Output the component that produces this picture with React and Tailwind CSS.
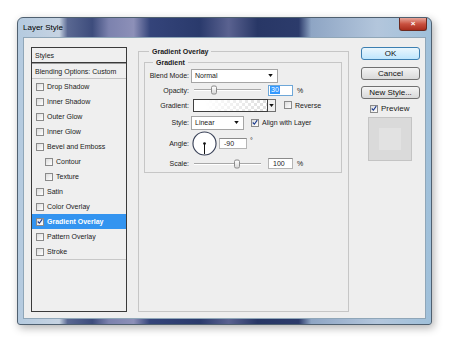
import React from 'react';

const Check = ({ checked, className = '' }) => (
  <span className={`w-[8px] h-[8px] shrink-0 border border-[#8a8a8a] bg-gradient-to-br from-[#dcdcdc] to-white flex items-center justify-center ${className}`}>
    {checked && (
      <svg viewBox="0 0 8 8" className="w-[7px] h-[7px]">
        <path d="M1 4 L3.2 6.3 L7 0.8" stroke="#1d3c8f" strokeWidth="1.5" fill="none" />
      </svg>
    )}
  </span>
);

const Arrow = () => (
  <svg viewBox="0 0 6 4" className="w-[5px] h-[3px]">
    <path d="M0 0 H6 L3 4 Z" fill="#111" />
  </svg>
);

const Slider = ({ thumb }) => (
  <div className="relative w-[67px] h-full flex items-center">
    <div className="w-full h-[2px] border-t border-[#a8a8a8] border-b border-b-white" />
    <div
      className={`absolute ${thumb} top-1/2 -translate-y-1/2 w-[6px] h-[9px] rounded-[2px] border border-[#8c8c8c] bg-gradient-to-b from-white to-[#d8d8d8]`}
    />
  </div>
);

const Field = ({ w, children }) => (
  <div className={`${w} h-[11px] bg-white border border-[#b5b5b5] border-t-[#8a8a8a] flex items-center pl-[4px]`}>
    {children}
  </div>
);

const Button = ({ children, primary }) => (
  <div
    className={`h-[13px] w-full rounded-[3px] border flex items-center justify-center text-[8px] text-[#111] ${
      primary
        ? 'border-[#3c7fb1] bg-gradient-to-b from-[#eaf6fd] to-[#bee6fd]'
        : 'border-[#707070] bg-gradient-to-b from-[#f4f4f4] to-[#d9d9d9]'
    }`}
  >
    {children}
  </div>
);

const items = [
  ['Drop Shadow'],
  ['Inner Shadow'],
  ['Outer Glow'],
  ['Inner Glow'],
  ['Bevel and Emboss'],
  ['Contour', true],
  ['Texture', true],
  ['Satin'],
  ['Color Overlay'],
  ['Gradient Overlay', false, true],
  ['Pattern Overlay'],
  ['Stroke'],
];

export default function App() {
  return (
    <div className="w-[450px] h-[343px] bg-white pt-[17px] pl-[17px] font-['Liberation_Sans',Arial,sans-serif] text-[7px] text-[#1a1a1a] leading-none">
      <div className="w-[415px] h-[308px] rounded-t-[6px] rounded-b-[3px] border border-[#4f6070] flex flex-col shadow-[2px_3px_8px_rgba(0,0,0,0.3)] bg-[linear-gradient(90deg,#b4cadf_0%,#c6d3e2_10%,#5a6892_12%,#3d4c7c_18%,#7c82ae_22%,#8d90b8_28%,#34447a_32%,#2a3a6c_44%,#5a6290_51%,#283766_58%,#2c3b6b_68%,#8ea5c4_71%,#b3c6dc_87%,#9fc0da_100%)]">
        {/* title bar */}
        <div className="h-[19px] flex items-start shrink-0">
          <div className="self-center pl-[5px] text-[8px] text-black">Layer Style</div>
          <div className="ml-auto mr-[4px] w-[28px] h-[13px] rounded-b-[3px] border border-[#6b2a20] border-t-0 bg-gradient-to-b from-[#e7a59a] via-[#c9503f] to-[#a92c1c] flex items-center justify-center text-white text-[8px] font-bold">
            ×
          </div>
        </div>

        {/* content */}
        <div className="flex-1 mx-[5px] mb-[5px] bg-[#eeeeee] border border-[#8fa6b8] flex items-start pt-[9px] pl-[7px]">
          {/* styles list */}
          <div className="w-[96px] h-[265px] border border-[#3a3a3a] bg-[#efefef] flex flex-col">
            <div className="h-[15px] flex items-center pl-[3px] border-b border-[#3a3a3a]">Styles</div>
            <div className="h-[16px] flex items-center pl-[3px] border-t border-[#9a9a9a] border-b border-b-[#c4c4c4]">
              Blending Options: Custom
            </div>
            {items.map(([label, indent, active]) => (
              <div
                key={label}
                className={`h-[15px] flex items-center ${indent ? 'pl-[13px]' : 'pl-[4px]'} ${
                  active ? 'bg-[#3394f0] text-white font-bold' : ''
                }`}
              >
                <Check checked={active} />
                <span className="ml-[3px]">{label}</span>
              </div>
            ))}
            <div className="border-t border-[#c8c8c8]" />
          </div>

          {/* gradient overlay group */}
          <fieldset className="ml-[11px] w-[211px] h-[265px] border border-[#c6c6c6] px-[5px]">
            <legend className="ml-[5px] px-[3px] font-bold h-[9px] leading-[9px]">Gradient Overlay</legend>
            <fieldset className="mt-[2px] w-[198px] border border-[#c6c6c6] pb-[2px]">
              <legend className="ml-[8px] px-[3px] font-bold h-[9px] leading-[9px]">Gradient</legend>

              <div className="h-[15px] mt-[1px] flex items-center">
                <span className="w-[44px] text-right">Blend Mode:</span>
                <div className="ml-[2px] w-[87px] h-[14px] bg-white border border-[#a5a5a5] flex items-center pl-[3px] pr-[4px]">
                  <span>Normal</span>
                  <span className="ml-auto"><Arrow /></span>
                </div>
              </div>

              <div className="h-[14px] flex items-center">
                <span className="w-[44px] text-right">Opacity:</span>
                <div className="ml-[5px] h-full"><Slider thumb="left-[17px]" /></div>
                <div className="ml-[7px] w-[25px] h-[11px] bg-white border border-[#6ea7d8] flex items-center pl-[1px]">
                  <span className="bg-[#3399ff] text-white px-[1px] leading-[8px]">30</span>
                </div>
                <span className="ml-[4px]">%</span>
              </div>

              <div className="h-[14px] mt-[1px] flex items-center">
                <span className="w-[44px] text-right">Gradient:</span>
                <div className="ml-[4px] w-[75px] h-[13px] border border-[#404040] bg-[linear-gradient(90deg,#ffffff_15%,rgba(255,255,255,0)_100%),repeating-conic-gradient(#dedede_0_25%,#ffffff_0_50%)] bg-[length:100%_100%,6px_6px]" />
                <div className="w-[8px] h-[13px] border border-l-0 border-[#707070] bg-[#f0f0f0] flex items-center justify-center">
                  <Arrow />
                </div>
                <Check className="ml-[8px]" />
                <span className="ml-[3px]">Reverse</span>
              </div>

              <div className="h-[15px] mt-[3px] flex items-center">
                <span className="w-[44px] text-right">Style:</span>
                <div className="ml-[2px] w-[53px] h-[14px] bg-white border border-[#a5a5a5] flex items-center pl-[3px] pr-[4px]">
                  <span>Linear</span>
                  <span className="ml-auto"><Arrow /></span>
                </div>
                <Check checked className="ml-[7px]" />
                <span className="ml-[3px]">Align with Layer</span>
              </div>

              <div className="h-[27px] flex items-center">
                <span className="w-[44px] text-right">Angle:</span>
                <svg viewBox="0 0 26 26" className="ml-[3px] w-[25px] h-[25px]">
                  <circle cx="13" cy="13" r="12" fill="#fff" stroke="#3a4258" strokeWidth="1.2" />
                  <line x1="13" y1="13" x2="13" y2="24" stroke="#111" strokeWidth="1.1" />
                  <circle cx="13" cy="13" r="1.4" fill="#111" />
                </svg>
                <div className="ml-[2px]"><Field w="w-[28px]">-90</Field></div>
                <span className="ml-[3px] self-start mt-[7px]">°</span>
              </div>

              <div className="h-[13px] flex items-center">
                <span className="w-[44px] text-right">Scale:</span>
                <div className="ml-[5px] h-full"><Slider thumb="left-[40px]" /></div>
                <div className="ml-[7px]"><Field w="w-[25px]">100</Field></div>
                <span className="ml-[4px]">%</span>
              </div>
            </fieldset>
          </fieldset>

          {/* buttons */}
          <div className="ml-[12px] w-[59px] flex flex-col">
            <Button primary>OK</Button>
            <div className="mt-[7px]"><Button>Cancel</Button></div>
            <div className="mt-[6px]"><Button>New Style...</Button></div>
            <div className="mt-[4px] h-[11px] flex items-center pl-[9px]">
              <Check checked />
              <span className="ml-[3px] text-[8px]">Preview</span>
            </div>
            <div className="mt-[3px] ml-[7px] w-[44px] h-[44px] border border-[#c4c4c4] bg-[#dadada] flex items-center justify-center">
              <div className="w-[22px] h-[22px] bg-[#e2e2e2]" />
            </div>
          </div>
        </div>
      </div>
    </div>
  );
}
